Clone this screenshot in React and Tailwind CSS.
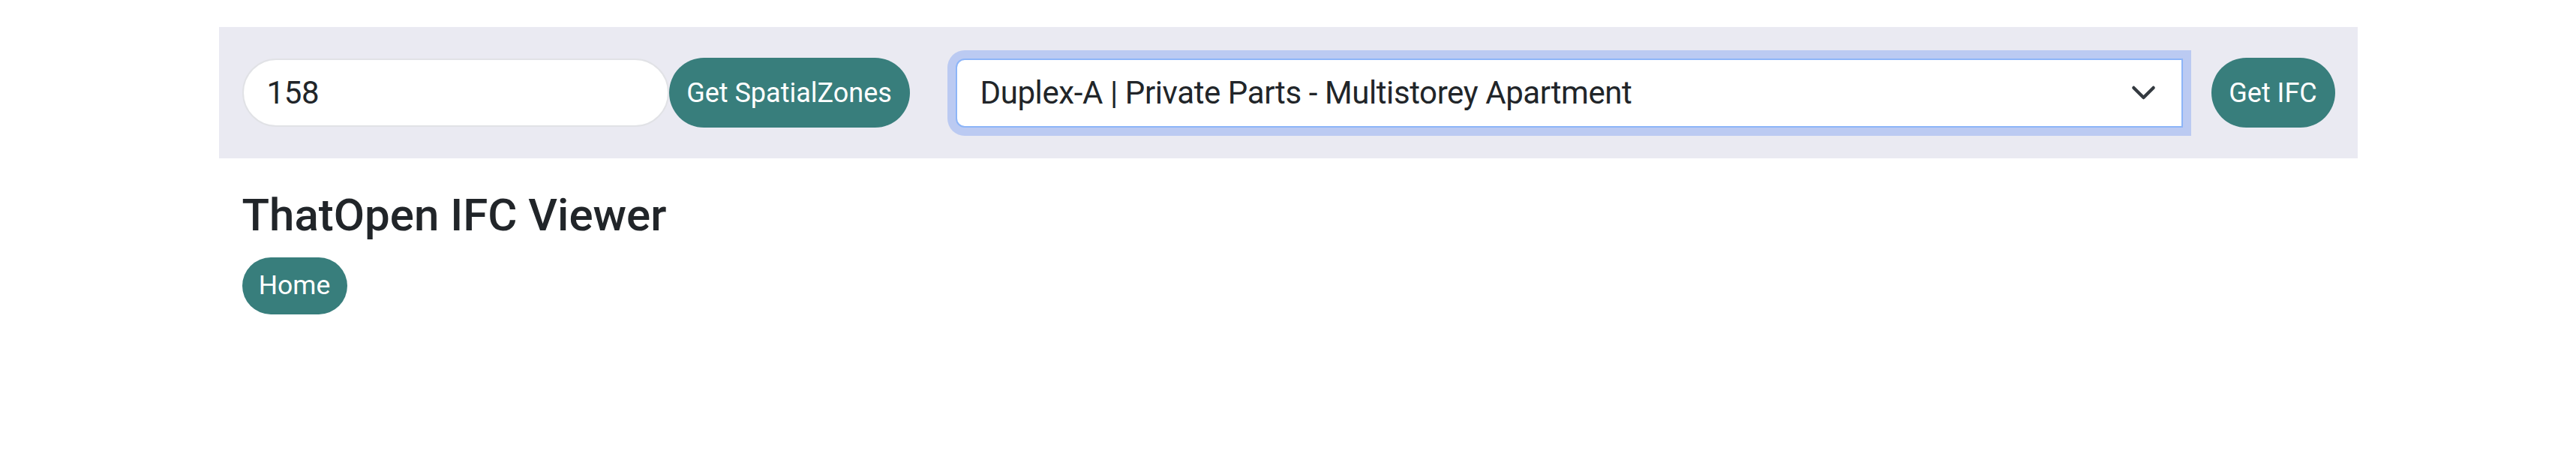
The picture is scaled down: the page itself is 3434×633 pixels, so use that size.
import React from "react";

export default function App() {
  return (
    <div className="w-full bg-white text-[#212529]" style={{ fontFamily: "Roboto, 'Noto Sans', sans-serif" }}>
      <div className="mx-auto w-[2851px] pt-[36px]">
        <div className="flex h-[175px] items-center bg-[#eaeaf2] pl-[31px] pr-[30px]">
          <div className="flex w-[569px] h-[91px] items-center rounded-full border-2 border-[#e1e2e6] bg-white pl-[31px] text-[42px] tracking-[-0.4px]">
            158
          </div>
          <button className="flex h-[93px] w-[321px] items-center justify-center rounded-full bg-[#387e7c] text-[36px] text-white">
            Get SpatialZones
          </button>
          <div className="ml-[61px] flex h-[92px] flex-1 items-center rounded-l-[12px] border-2 border-[#8db5f8] bg-white pl-[31px] pr-[33px] text-[42px] tracking-[-0.4px] ring-[11px] ring-[#bbcaf2]">
            <span className="flex-1">Duplex-A | Private Parts - Multistorey Apartment</span>
            <svg width="35" height="35" viewBox="0 0 16 16" fill="none">
              <path d="m2 5 6 6 6-6" stroke="#343a40" strokeWidth="2" strokeLinecap="round" strokeLinejoin="round" />
            </svg>
          </div>
          <button className="ml-[38px] flex h-[93px] w-[165px] items-center justify-center rounded-full bg-[#387e7c] text-[36px] text-white">
            Get IFC
          </button>
        </div>
        <div className="pl-[31px]">
          <h3 className="mt-[40px] text-[60px] leading-[1.2] font-medium">ThatOpen IFC Viewer</h3>
          <button className="mt-[20px] flex h-[76px] w-[140px] items-center justify-center rounded-full bg-[#387e7c] text-[35.5px] text-white">
            Home
          </button>
        </div>
      </div>
    </div>
  );
}
